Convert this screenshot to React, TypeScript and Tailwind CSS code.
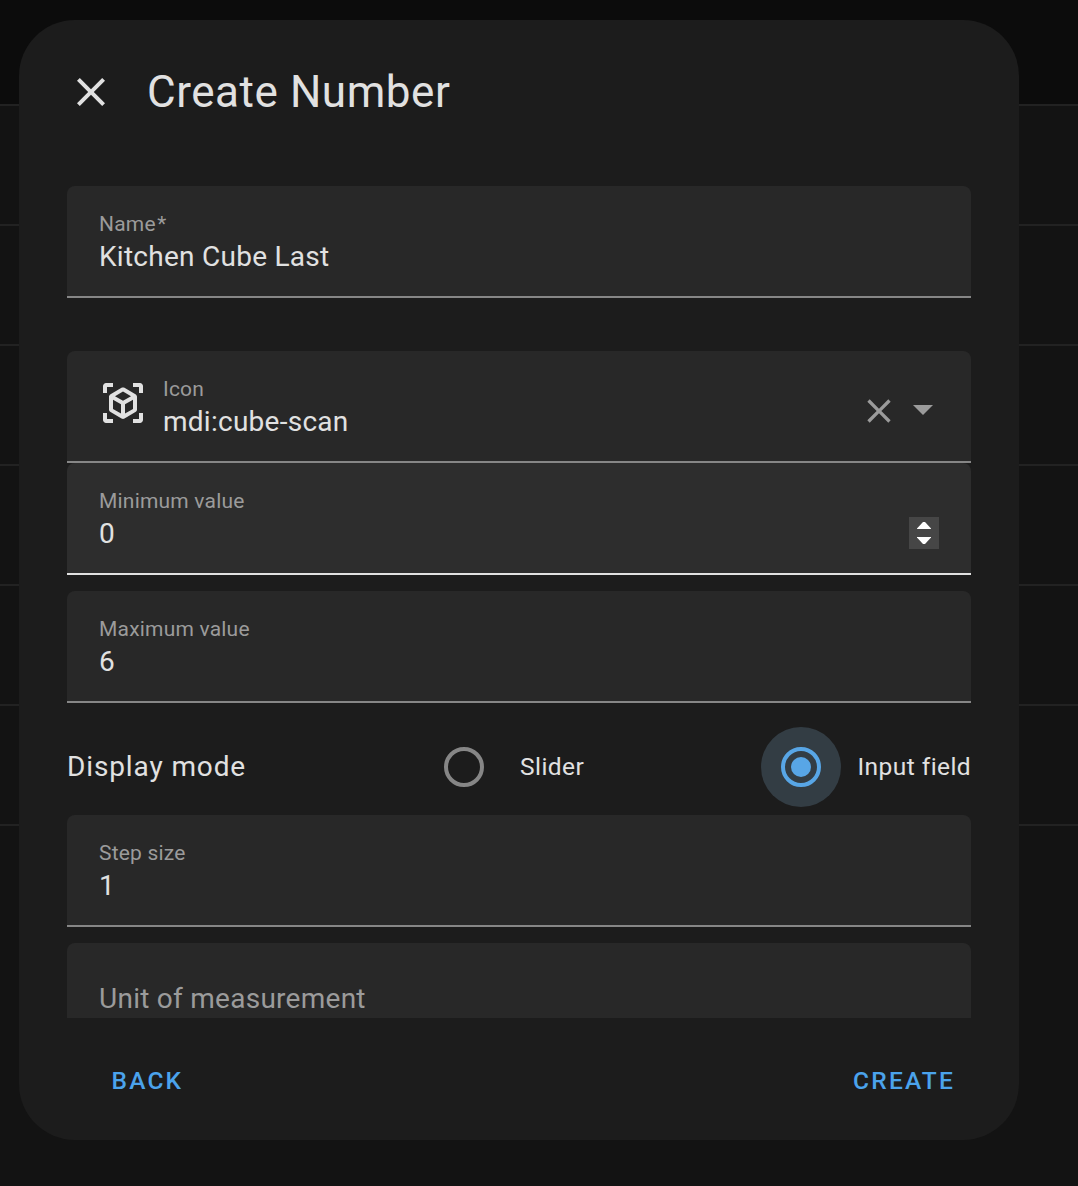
import type { ReactNode } from "react";

const CLOSE =
  "M19,6.41L17.59,5L12,10.59L6.41,5L5,6.41L10.59,12L5,17.59L6.41,19L12,13.41L17.59,19L19,17.59L13.41,12L19,6.41Z";
const MENU_DOWN = "M7,10L12,15L17,10H7Z";
const CUBE_SCAN =
  "M17,22V20H20V17H22V20.5C22,20.89 21.84,21.24 21.54,21.54C21.24,21.84 20.89,22 20.5,22H17M7,22H3.5C3.11,22 2.76,21.84 2.46,21.54C2.16,21.24 2,20.89 2,20.5V17H4V20H7V22M17,2H20.5C20.89,2 21.24,2.16 21.54,2.46C21.84,2.76 22,3.11 22,3.5V7H20V4H17V2M7,2V4H4V7H2V3.5C2,3.11 2.16,2.76 2.46,2.46C2.76,2.16 3.11,2 3.5,2H7M13,17.25L17,14.95V10.36L13,12.66V17.25M12,10.92L16,8.63L12,6.28L8,8.63L12,10.92M7,14.95L11,17.25V12.66L7,10.36V14.95M18.23,7.59C18.73,7.91 19,8.34 19,8.91V15.23C19,15.8 18.73,16.23 18.23,16.55L12.75,19.73C12.25,20.05 11.75,20.05 11.25,19.73L5.77,16.55C5.27,16.23 5,15.8 5,15.23V8.91C5,8.34 5.27,7.91 5.77,7.59L11.25,4.41C11.5,4.28 11.75,4.22 12,4.22C12.25,4.22 12.5,4.28 12.75,4.41L18.23,7.59Z";

function Icon({ path, className }: { path: string; className: string }) {
  return (
    <svg viewBox="0 0 24 24" fill="currentColor" className={className}>
      <path d={path} />
    </svg>
  );
}

function Field({
  label,
  value,
  required = false,
  leading,
  trailing,
  focused = false,
}: {
  label: string;
  value: string;
  required?: boolean;
  leading?: ReactNode;
  trailing?: ReactNode;
  focused?: boolean;
}) {
  return (
    <div
      className={
        focused
          ? "flex h-28 shrink-0 rounded-t-lg border-b-2 border-[#e1e1e1] bg-[#2d2d2d] px-8"
          : "flex h-28 shrink-0 rounded-t-lg border-b-2 border-[#868686] bg-[#282828] px-8"
      }
    >
      {leading}
      <div className="flex flex-1 flex-col pt-[25px]">
        <span className="h-[26px] origin-top-left scale-75 text-[28px] leading-[33px] tracking-[0.2625px] text-[#9b9b9b]">
          {label}
          {required && <span className="ml-[2px]">*</span>}
        </span>
        <span className="mt-1 text-[28px] leading-8 tracking-[0.2625px] text-[#e1e1e1]">{value}</span>
      </div>
      {trailing}
    </div>
  );
}

function Spinner() {
  return (
    <div className="mt-[54px] flex h-8 w-[30px] flex-col items-center justify-between bg-[#464646] py-[5px]">
      <svg viewBox="0 0 14 7" className="h-[7px] w-3.5 fill-white">
        <path d="M0 7V6.5L6 0H8L14 6.5V7Z" />
      </svg>
      <svg viewBox="0 0 14 7" className="h-[7px] w-3.5 fill-white">
        <path d="M0 0V0.5L6 7H8L14 0.5V0Z" />
      </svg>
    </div>
  );
}

export default function App() {
  return (
    <div className="relative h-[1186px] w-[1078px] overflow-hidden bg-[#131313] font-[Roboto,sans-serif]">
      <div className="absolute inset-0 flex flex-col">
        <div className="h-[106px] border-b-2 border-[#222222] bg-[#0c0c0c]" />
        {[0, 1, 2, 3, 4, 5].map((row) => (
          <div key={row} className="h-[120px] border-b-2 border-[#222222]" />
        ))}
      </div>

      <div className="relative mt-5 ml-[19px] flex h-[1120px] w-[1000px] flex-col rounded-[56px] bg-[#1c1c1c] px-12">
        <header className="flex h-36 items-center">
          <Icon path={CLOSE} className="size-12 text-[#e1e1e1]" />
          <h1 className="ml-8 text-[44px] leading-[56px] tracking-[0.55px] text-[#e1e1e1]">Create Number</h1>
        </header>

        <main className="mt-[22px] flex h-[832px] flex-col overflow-hidden">
          <Field label="Name" value="Kitchen Cube Last" required />
          <div className="h-[53px] shrink-0" />
          <Field
            label="Icon"
            value="mdi:cube-scan"
            leading={<Icon path={CUBE_SCAN} className="mt-7 mr-4 size-12 text-[#e1e1e1]" />}
            trailing={
              <div className="mt-[34px] flex h-12 items-start text-[#9b9b9b]">
                <Icon path={CLOSE} className="mt-1.5 size-10" />
                <Icon path={MENU_DOWN} className="-mr-2 size-12" />
              </div>
            }
          />
          <Field label="Minimum value" value="0" focused trailing={<Spinner />} />
          <div className="h-4 shrink-0" />
          <Field label="Maximum value" value="6" />

          <div className="flex h-28 shrink-0 items-center pt-4 text-[#e1e1e1]">
            <span className="w-[377px] shrink-0 text-[28px] tracking-[0.875px]">Display mode</span>
            <span className="size-10 shrink-0 rounded-full border-4 border-[#868686]" />
            <span className="ml-9 w-[241px] shrink-0 text-[24.5px] tracking-[0.4375px]">Slider</span>
            <span className="flex size-20 shrink-0 items-center justify-center rounded-full bg-[#333d44]">
              <span className="flex size-10 items-center justify-center rounded-full border-4 border-[#58a6e6]">
                <span className="size-5 rounded-full bg-[#58a6e6]" />
              </span>
            </span>
            <span className="ml-[16.5px] text-[24.5px] whitespace-nowrap tracking-[0.4375px]">Input field</span>
          </div>

          <Field label="Step size" value="1" />
          <div className="h-4 shrink-0" />
          <div className="flex h-28 shrink-0 items-center rounded-t-lg bg-[#282828] px-8 text-[28px] tracking-[0.2625px] text-[#9b9b9b]">
            Unit of measurement
          </div>
        </main>

        <footer className="mt-[27px] flex h-[72px] items-center justify-between pr-4 pl-[44.5px] text-[24.5px] font-medium tracking-[2.1875px] text-[#4ba3ec]">
          <button>BACK</button>
          <button>CREATE</button>
        </footer>
      </div>
    </div>
  );
}
